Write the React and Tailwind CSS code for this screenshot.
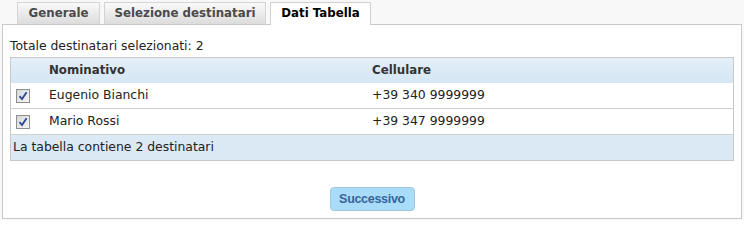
import { useState } from "react";

const font = "font-['DejaVu_Sans',Verdana,sans-serif]";

const tabs = [
  { label: "Generale", width: "w-[83px]" },
  { label: "Selezione destinatari", width: "w-[162px]" },
  { label: "Dati Tabella", width: "w-[101px]", active: true },
];

const rows = [
  { id: 1, name: "Eugenio Bianchi", phone: "+39 340 9999999" },
  { id: 2, name: "Mario Rossi", phone: "+39 347 9999999" },
];

function Check({ checked, onChange }) {
  return (
    <button
      type="button"
      onClick={onChange}
      className="w-[14px] h-[14px] border border-[#8e8f8f] bg-gradient-to-br from-[#d8d8d8] to-[#f6f6f6] flex items-center justify-center"
    >
      {checked && (
        <svg width="10" height="10" viewBox="0 0 10 10">
          <path d="M1.5 5.2 L4 8 L8.6 1.2" fill="none" stroke="#27479a" strokeWidth="1.8" />
        </svg>
      )}
    </button>
  );
}

export default function App() {
  const [checked, setChecked] = useState({ 1: true, 2: true });

  return (
    <div className={`w-[744px] h-[220px] bg-[#f8f8f8] pt-[2px] ${font}`}>
      {/* Tabs */}
      <div className="relative z-10 flex items-start gap-[4px] pl-[17px] h-[23px]">
        {tabs.map((t) =>
          t.active ? (
            <div
              key={t.label}
              className={`${t.width} h-[23px] bg-white border border-b-0 border-[#d0d0d0] text-[11.8px] font-bold text-black flex items-center justify-center`}
            >
              {t.label}
            </div>
          ) : (
            <div
              key={t.label}
              className={`${t.width} h-[22px] bg-gradient-to-b from-[#fafafa] to-[#dcdcdc] border border-b-0 border-[#d4d4d4] text-[11.8px] font-bold text-[#4a4a4a] flex items-center justify-center`}
            >
              {t.label}
            </div>
          )
        )}
      </div>

      {/* Panel */}
      <div className="-mt-px ml-[2px] w-[740px] h-[195px] bg-white border border-[#c8c8c8] px-[7px] pt-[13px] text-[#222]">
        <div className="text-[12.4px] leading-[16px]">Totale destinatari selezionati: {rows.length}</div>

        <div className="mt-[3px] w-[724px] border border-[#c8c8c8] text-[12.4px]">
          <div className="grid grid-cols-[38px_323px_1fr] items-center h-[25px] bg-gradient-to-b from-[#e4eff9] to-[#d5e6f4] font-bold text-[11.8px] text-[#333]">
            <div />
            <div>Nominativo</div>
            <div>Cellulare</div>
          </div>
          {rows.map((r) => (
            <div
              key={r.id}
              className="grid grid-cols-[38px_323px_1fr] items-center h-[26px] border-b border-[#d0d0d0]"
            >
              <div className="pl-[5px] flex items-center">
                <Check
                  checked={checked[r.id]}
                  onChange={() => setChecked({ ...checked, [r.id]: !checked[r.id] })}
                />
              </div>
              <div>{r.name}</div>
              <div>{r.phone}</div>
            </div>
          ))}
          <div className="h-[25px] flex items-center pl-[2px] bg-[#dbe9f5]">
            La tabella contiene {rows.length} destinatari
          </div>
        </div>

        <div className="flex justify-center mt-[26px]">
          <button
            type="button"
            className="w-[85px] h-[24px] rounded-[4px] border border-[#a3c6dc] bg-[#a9dcf8] text-[#35659a] font-bold text-[12.5px] tracking-[-0.3px] font-['Liberation_Sans',Arial,sans-serif]"
          >
            Successivo
          </button>
        </div>
      </div>
    </div>
  );
}
